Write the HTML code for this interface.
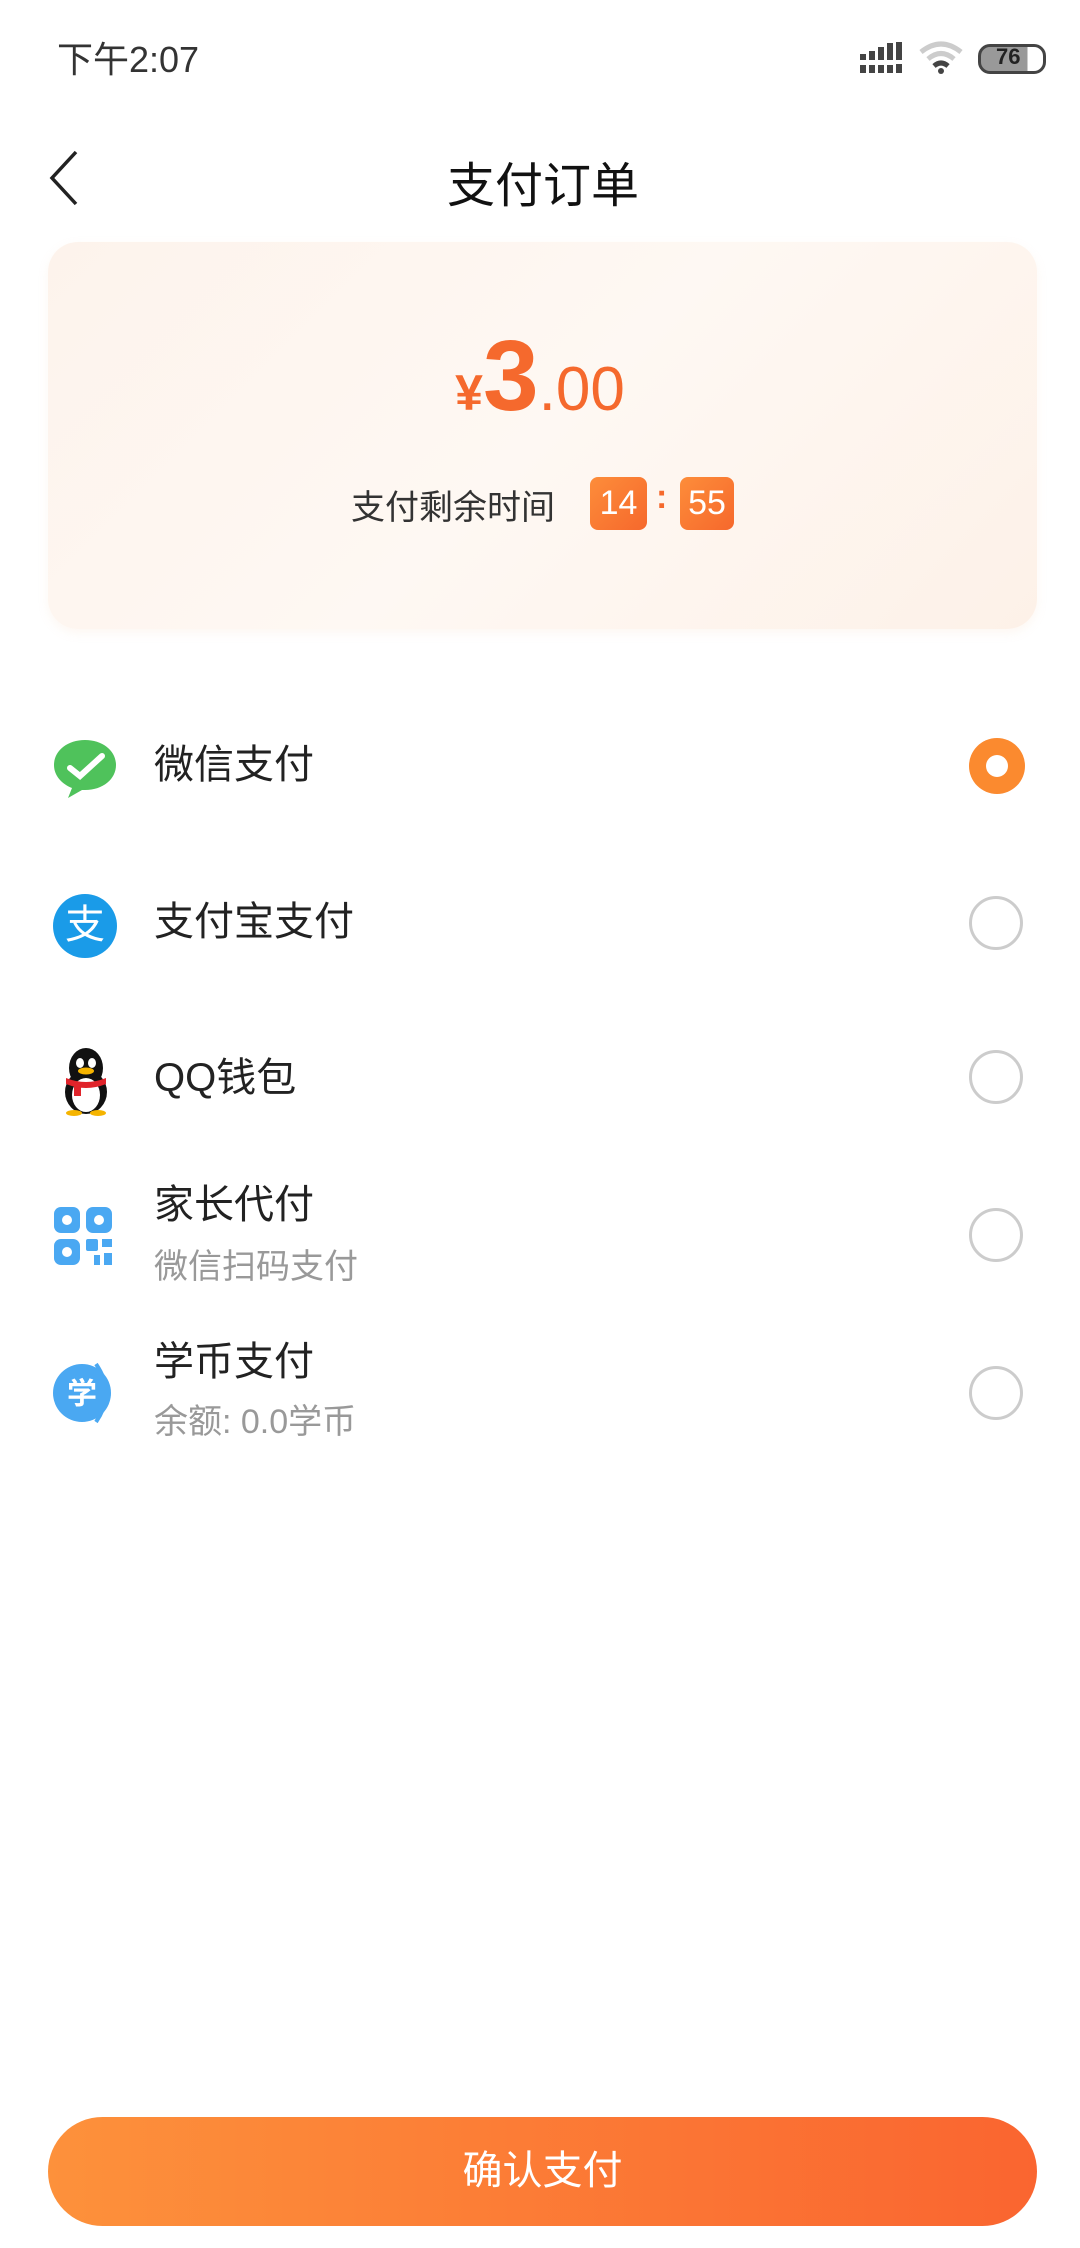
<!DOCTYPE html>
<html><head><meta charset="utf-8"><style>
*{margin:0;padding:0;box-sizing:border-box}
body{width:1080px;height:2248px;background:#fff;position:relative;overflow:hidden;font-family:"Liberation Sans","Noto Sans CJK SC",sans-serif;color:#222}
.a{position:absolute}
.t{position:absolute;left:154px;font-size:40px;color:#222;line-height:1}
.s{position:absolute;left:154px;font-size:34px;color:#999;line-height:1}
.r{position:absolute;left:969px;width:54px;height:54px;border-radius:50%;border:3px solid #ccc}
</style></head><body>
<div class="a" style="left:57px;top:31px;font-size:36px;color:#333">下午2:07</div>
<svg class="a" style="left:860px;top:42px" width="48" height="32"><g fill="#444"><rect x="0" y="12" width="6" height="6"/><rect x="9" y="9" width="6" height="9"/><rect x="18" y="5" width="6" height="13"/><rect x="27" y="1" width="6" height="17"/><rect x="36" y="0" width="6" height="18"/><rect x="0" y="23" width="6" height="8"/><rect x="9" y="23" width="6" height="8"/><rect x="18" y="23" width="6" height="8"/><rect x="27" y="23" width="6" height="8"/><rect x="36" y="22" width="6" height="9"/></g></svg>
<svg class="a" style="left:918px;top:40px" width="46" height="36"><path d="M3 12 Q23 -4 43 12" stroke="#ccc" stroke-width="5" fill="none"/><path d="M10 19 Q23 8 36 19" stroke="#ccc" stroke-width="5" fill="none"/><path d="M16 26 Q23 20 30 26" stroke="#444" stroke-width="5" fill="none"/><circle cx="23" cy="31" r="3" fill="#444"/></svg>
<div class="a" style="left:978px;top:44px;width:68px;height:30px;border:3px solid #444;border-radius:12px;background:linear-gradient(90deg,#999 0 75%,#fff 75%)"></div>
<div class="a" style="left:996px;top:44px;font-size:22px;font-weight:bold;color:#222">76</div>
<svg class="a" style="left:46px;top:150px" width="36" height="56"><path d="M30 2 L6 28 L30 54" stroke="#222" stroke-width="3.5" fill="none"/></svg>
<div class="a" style="left:0;width:1086px;text-align:center;top:146px;font-size:48px;color:#111">支付订单</div>
<div class="a" style="left:48px;top:242px;width:989px;height:387px;border-radius:30px;background:linear-gradient(135deg,#fdf3ec,#fef8f3 50%,#fdf1e8);box-shadow:0 4px 10px rgba(240,200,170,0.15)"></div>
<div class="a" style="left:0;width:1080px;top:326px;text-align:center;color:#f5692d;white-space:nowrap;line-height:1">
<span style="font-size:50px;font-weight:bold">¥</span><span style="font-size:100px;font-weight:bold">3</span><span style="font-size:62px">.00</span></div>
<div class="a" style="left:351px;top:480px;font-size:34px;color:#333">支付剩余时间</div>
<div class="a" style="left:590px;top:477px;width:57px;height:53px;border-radius:8px;background:linear-gradient(135deg,#fd8d3a,#f6682c);color:#fff;font-size:34px;text-align:center;line-height:53px">14</div>
<div class="a" style="left:656px;top:478px;font-size:34px;font-weight:bold;color:#f5692d">:</div>
<div class="a" style="left:680px;top:477px;width:54px;height:53px;border-radius:8px;background:linear-gradient(135deg,#fd8d3a,#f6682c);color:#fff;font-size:34px;text-align:center;line-height:53px">55</div>

<svg class="a" style="left:52px;top:738px" width="66" height="60"><path d="M33 2 C15 2 2 13 2 27 C2 38 10 46 20 50 L16 60 L30 52 C31 52 32 52 33 52 C51 52 64 41 64 27 C64 13 51 2 33 2Z" fill="#4fc25b"/><path d="M18 30 L28 38 L50 18" stroke="#fff" stroke-width="6" fill="none" stroke-linecap="round"/></svg>
<div class="t" style="top:745px">微信支付</div>
<div class="a" style="left:969px;top:738px;width:56px;height:56px;border-radius:50%;background:#fb8a2f"></div>
<div class="a" style="left:986px;top:755px;width:22px;height:22px;border-radius:50%;background:#fff"></div>

<div class="a" style="left:53px;top:894px;width:64px;height:64px;border-radius:50%;background:#1a9be8;color:#fff;font-size:40px;text-align:center;line-height:62px">支</div>
<div class="t" style="top:902px">支付宝支付</div>
<div class="r" style="top:896px"></div>

<svg class="a" style="left:56px;top:1046px" width="60" height="70"><ellipse cx="30" cy="22" rx="17" ry="20" fill="#111"/><ellipse cx="30" cy="46" rx="21" ry="22" fill="#111"/><ellipse cx="30" cy="49" rx="14" ry="17" fill="#fff"/><ellipse cx="24" cy="17" rx="4" ry="5" fill="#fff"/><ellipse cx="36" cy="17" rx="4" ry="5" fill="#fff"/><ellipse cx="30" cy="25" rx="8" ry="3.5" fill="#f5b400"/><path d="M10 32 Q30 40 50 32 L50 38 Q30 46 10 38Z" fill="#e0242b"/><rect x="18" y="38" width="7" height="12" fill="#e0242b"/><ellipse cx="18" cy="67" rx="8" ry="3" fill="#f5b400"/><ellipse cx="42" cy="67" rx="8" ry="3" fill="#f5b400"/></svg>
<div class="t" style="top:1058px">QQ钱包</div>
<div class="r" style="top:1050px"></div>

<svg class="a" style="left:54px;top:1207px" width="62" height="62"><g fill="#4aa8f2"><rect x="0" y="0" width="26" height="26" rx="7"/><rect x="32" y="0" width="26" height="26" rx="7"/><rect x="0" y="32" width="26" height="26" rx="7"/><rect x="32" y="32" width="12" height="12" rx="2"/><rect x="48" y="32" width="10" height="8"/><rect x="40" y="48" width="6" height="10"/><rect x="50" y="46" width="8" height="12"/></g><g fill="#fff"><circle cx="13" cy="13" r="5"/><circle cx="45" cy="13" r="5"/><circle cx="13" cy="45" r="5"/></g></svg>
<div class="t" style="top:1185px">家长代付</div>
<div class="s" style="top:1250px">微信扫码支付</div>
<div class="r" style="top:1208px"></div>

<svg class="a" style="left:52px;top:1360px" width="68" height="66"><path d="M44 4 Q64 33 44 62" stroke="#4aa8f2" stroke-width="4" fill="none"/><circle cx="30" cy="33" r="29" fill="#4aa8f2"/><text x="30" y="44" font-size="30" fill="#fff" text-anchor="middle" font-family="Noto Sans CJK SC,sans-serif" font-weight="bold">学</text></svg>
<div class="t" style="top:1342px">学币支付</div>
<div class="s" style="top:1405px">余额: 0.0学币</div>
<div class="r" style="top:1366px"></div>

<div class="a" style="left:48px;top:2117px;width:989px;height:109px;border-radius:55px;background:linear-gradient(90deg,#fd913b,#fa6530);color:#fff;font-size:40px;text-align:center;line-height:109px">确认支付</div>
</body></html>
